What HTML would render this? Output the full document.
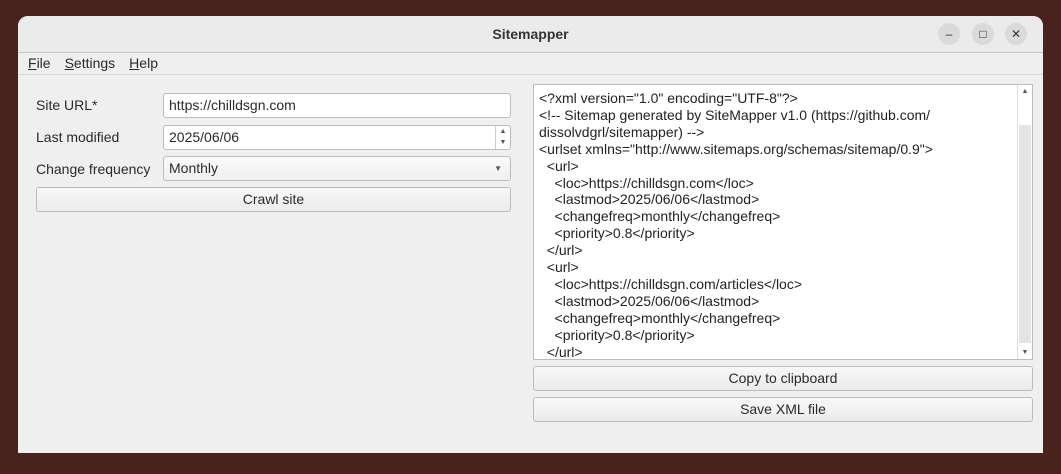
<!DOCTYPE html><html><head><style>
body{margin:0;width:1061px;height:474px;background:#4a221d;font-family:"Liberation Sans",sans-serif;font-size:14px;color:#2a2a2a;position:relative;overflow:hidden}
.win{position:absolute;left:18px;top:16px;width:1025px;height:437px;background:#efefef;border-radius:10px 10px 0 0;overflow:hidden}
.tb{height:36px;background:#ebebeb;border-bottom:1px solid #c8c8c8;text-align:center;line-height:36px;font-weight:bold;font-size:14px;color:#333}
.cb{position:absolute;top:7px;width:22px;height:22px;border-radius:11px;background:#dadada;font-size:12px;line-height:22px;text-align:center;color:#333;font-weight:normal}
.menu{height:21px;border-bottom:1px solid #d8d8d8;line-height:21px;padding-left:10px}
.menu span{margin-right:14px}
.a{position:absolute}
.lbl{left:18px}
.in{background:#fff;border:1px solid #bdbdbd;border-radius:3px;box-sizing:border-box;height:25px;line-height:23px;padding-left:5px}
.btn{background:linear-gradient(#f8f8f8,#ebebeb);border:1px solid #bcbcbc;border-radius:3px;box-sizing:border-box;height:25px;line-height:23px;text-align:center}
.ta{left:515px;top:68px;width:500px;height:276px;background:#fff;border:1px solid #bdbdbd;box-sizing:border-box;overflow:hidden}
.ta pre{margin:0;padding:5px 0 0 5px;font-family:"Liberation Sans",sans-serif;font-size:14px;line-height:16.9px;color:#222;white-space:pre}
.sb{position:absolute;right:0;top:0;width:14px;height:274px;border-left:1px solid #ddd;background:#fff}
</style></head><body>
<div class="win">
<div class="tb">Sitemapper
<div class="cb" style="left:920px">–</div><div class="cb" style="left:954px">□</div><div class="cb" style="left:987px">✕</div></div>
<div class="menu"><span><u>F</u>ile</span><span><u>S</u>ettings</span><span><u>H</u>elp</span></div>
<div class="a lbl" style="top:81px">Site URL*</div>
<div class="a in" style="left:145px;top:77px;width:348px">https://chilldsgn.com</div>
<div class="a lbl" style="top:113px">Last modified</div>
<div class="a in" style="left:145px;top:109px;width:348px">2025/06/06<span style="position:absolute;right:0;top:0;width:14px;height:23px;border-left:1px solid #ccc;font-size:7px;line-height:11px;text-align:center;color:#555">▲<br>▼</span></div>
<div class="a lbl" style="top:145px">Change frequency</div>
<div class="a in" style="left:145px;top:140px;width:348px;background:linear-gradient(#fafafa,#f0f0f0)">Monthly<span style="position:absolute;right:8px;top:0;font-size:8px;color:#555">▼</span></div>
<div class="a btn" style="left:18px;top:171px;width:475px">Crawl site</div>
<div class="a ta"><pre>&lt;?xml version="1.0" encoding="UTF-8"?&gt;
&lt;!-- Sitemap generated by SiteMapper v1.0 (https://github.com/
dissolvdgrl/sitemapper) --&gt;
&lt;urlset xmlns="http://www.sitemaps.org/schemas/sitemap/0.9"&gt;
  &lt;url&gt;
    &lt;loc&gt;https://chilldsgn.com&lt;/loc&gt;
    &lt;lastmod&gt;2025/06/06&lt;/lastmod&gt;
    &lt;changefreq&gt;monthly&lt;/changefreq&gt;
    &lt;priority&gt;0.8&lt;/priority&gt;
  &lt;/url&gt;
  &lt;url&gt;
    &lt;loc&gt;https://chilldsgn.com/articles&lt;/loc&gt;
    &lt;lastmod&gt;2025/06/06&lt;/lastmod&gt;
    &lt;changefreq&gt;monthly&lt;/changefreq&gt;
    &lt;priority&gt;0.8&lt;/priority&gt;
  &lt;/url&gt;</pre>
<div class="sb"><div style="font-size:7px;text-align:center;color:#555;padding-top:3px">▲</div><div style="position:absolute;top:40px;left:1px;width:12px;height:218px;background:#e4e4e4"></div><div style="position:absolute;bottom:3px;width:14px;font-size:7px;text-align:center;color:#555">▼</div></div></div>
<div class="a btn" style="left:515px;top:350px;width:500px">Copy to clipboard</div>
<div class="a btn" style="left:515px;top:381px;width:500px">Save XML file</div>
</div>
</body></html>
